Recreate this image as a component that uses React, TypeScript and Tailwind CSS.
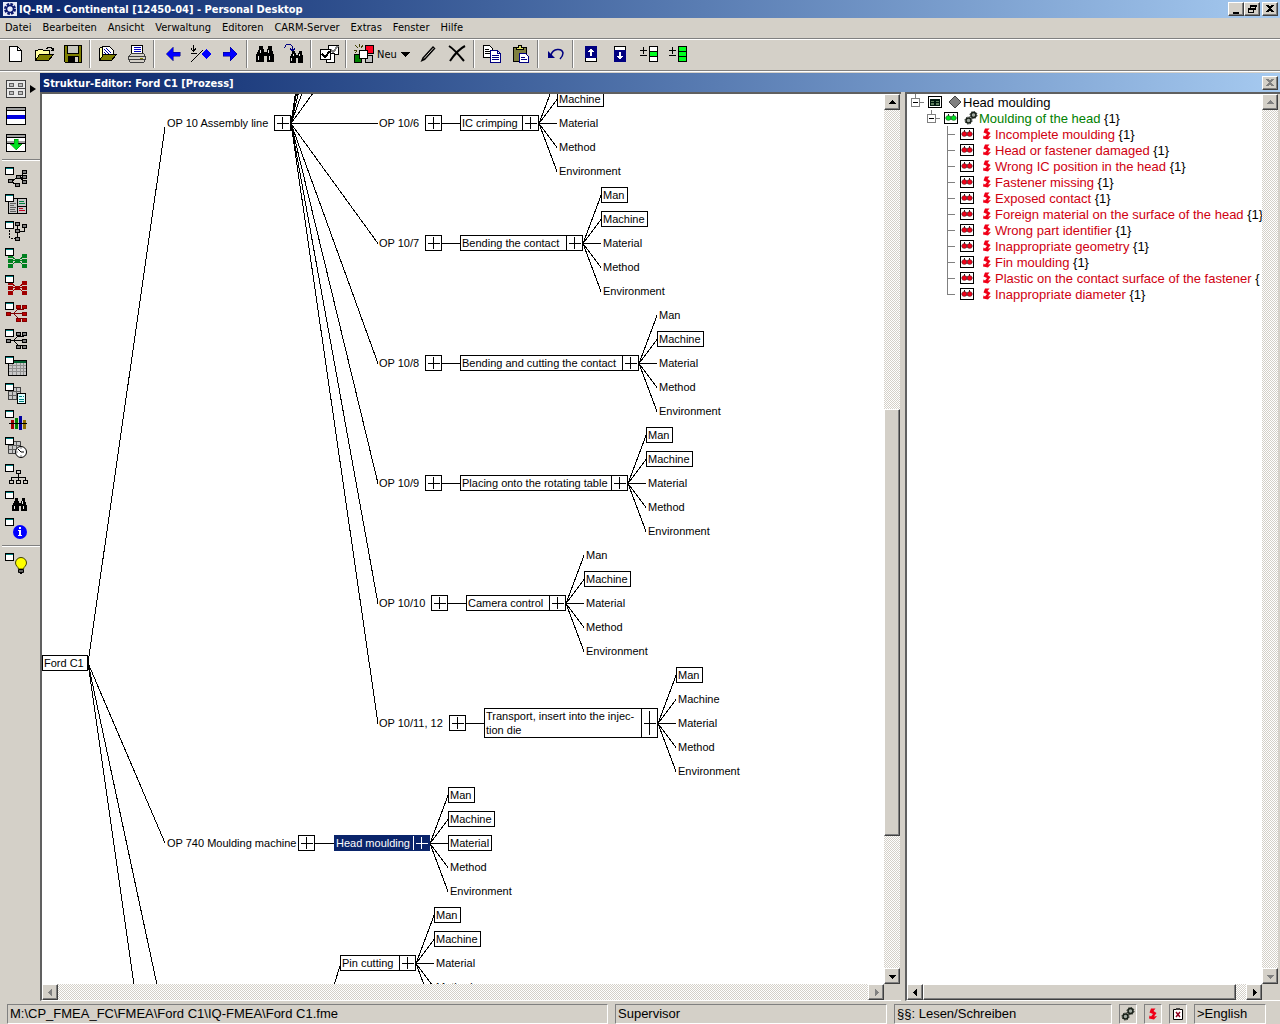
import React from "react";

type Leaf = "Man" | "Machine" | "Material" | "Method" | "Environment";

interface Operation {
  id: string;
  y: number;
  label?: string;
  labelX?: number;
  expandX?: number;
  boxX: number;
  boxWidth: number;
  title: string[];
  boxed: Leaf[];
  selected?: boolean;
}

const LEAVES: Leaf[] = ["Man", "Machine", "Material", "Method", "Environment"];
const LEAF_STEP = 24;

// visible slice of the scrolled diagram
const VIEW_TOP = 0;
const VIEW_BOTTOM = 898;

const LEAF_WIDTH: Record<Leaf, string> = {
  Man: "w-[27px]",
  Machine: "w-[47px]",
  Material: "w-[44px]",
  Method: "w-[44px]",
  Environment: "w-[66px]",
};

const OPERATIONS: Operation[] = [
  { id: "op6", y: 29, label: "OP 10/6", labelX: 337, expandX: 383, boxX: 418, boxWidth: 79, title: ["IC crimping"], boxed: ["Machine"] },
  { id: "op7", y: 149, label: "OP 10/7", labelX: 337, expandX: 383, boxX: 418, boxWidth: 123, title: ["Bending the contact"], boxed: ["Man", "Machine"] },
  { id: "op8", y: 269, label: "OP 10/8", labelX: 337, expandX: 383, boxX: 418, boxWidth: 179, title: ["Bending and cutting the contact"], boxed: ["Machine"] },
  { id: "op9", y: 389, label: "OP 10/9", labelX: 337, expandX: 383, boxX: 418, boxWidth: 168, title: ["Placing onto the rotating table"], boxed: ["Man", "Machine"] },
  { id: "op10", y: 509, label: "OP 10/10", labelX: 337, expandX: 389, boxX: 424, boxWidth: 100, title: ["Camera control"], boxed: ["Machine"] },
  { id: "op11", y: 629, label: "OP 10/11, 12", labelX: 337, expandX: 407, boxX: 442, boxWidth: 174, title: ["Transport, insert into the injec-", "tion die"], boxed: ["Man"] },
  { id: "op740", y: 749, label: "OP 740 Moulding machine", labelX: 125, expandX: 256, boxX: 292, boxWidth: 96, title: ["Head moulding"], boxed: ["Man", "Machine", "Material"], selected: true },
  { id: "pin", y: 869, boxX: 298, boxWidth: 76, title: ["Pin cutting"], boxed: ["Man", "Machine"] },
];

// x1, y1, x2, y2
const TRUNK_LINES = [
  [46, 569, 123, 33],
  [46, 569, 123, 749],
  [46, 569, 92, 891],
  [46, 569, 115, 891],
  [292, 891, 298, 872],
];

// operations hanging off the assembly line, including those scrolled out above
const ASSEMBLY_ROWS = [-571, -451, -331, -211, -91, 29, 149, 269, 389, 509, 629];

const MENU = ["Datei", "Bearbeiten", "Ansicht", "Verwaltung", "Editoren", "CARM-Server", "Extras", "Fenster", "Hilfe"];

const FAILURES = [
  "Incomplete moulding",
  "Head or fastener damaged",
  "Wrong IC position in the head",
  "Fastener missing",
  "Exposed contact",
  "Foreign material on the surface of the head",
  "Wrong part identifier",
  "Inappropriate geometry",
  "Fin moulding",
  "Plastic on the contact surface of the fastener",
  "Inappropriate diameter",
];

const RAISED = "border border-t-white border-l-white border-r-[#404040] border-b-[#404040] bg-[#d4d0c8] shadow-[inset_-1px_-1px_0_#808080]";
const TRACK = "bg-[repeating-conic-gradient(#ffffff_0_25%,#d4d0c8_0_50%)] bg-size-[2px_2px]";

function Icon({ children, smooth = false }: { children: React.ReactNode; smooth?: boolean }) {
  return (
    <svg viewBox="0 0 24 24" className="w-6 h-6 shrink-0" fill="none" shapeRendering={smooth ? "auto" : "crispEdges"} aria-hidden="true">
      {children}
    </svg>
  );
}

/* ---------- toolbar drawings ---------- */

const NewIcon = () => (
  <Icon>
    <path d="M6.500 4.500h8l4 4v11h-12z" fill="#fff" stroke="#000" />
    <path d="M14.500 4.500v4h4" stroke="#000" />
  </Icon>
);

const OpenIcon = () => (
  <Icon>
    <path d="M3.500 18.500v-10h2l1-1h4l1 1h6v4" fill="#ffffa0" stroke="#000" />
    <path d="M3.500 18.500l4-6h14l-5 6z" fill="#808000" stroke="#000" />
    <path d="M14 6.500h1l1-1h3l2 2v1M18.500 8.500h3v-3" stroke="#000" />
  </Icon>
);

const SaveIcon = () => (
  <Icon>
    <path d="M3.500 3.500h17v17h-16l-1-1z" fill="#808000" stroke="#000" />
    <path d="M7 4h10v7H7z" fill="#c8c8c0" />
    <path d="M6.500 4v7.500h11V4" stroke="#000" />
    <path d="M7 14h11v7H7z" fill="#000" />
    <path d="M14 15h3v5h-3z" fill="#d4d0c8" />
  </Icon>
);

const OpenDocIcon = () => (
  <Icon>
    <path d="M3.500 18.500v-12l1-1h3v4h10v3" fill="#ffffa0" stroke="#000" />
    <path d="M6.500 12.500v-8h7l4 4v6h-11z" fill="#fff" stroke="#000" />
    <path d="M8 7l6 6M8 10l3 3M10 6l5 5" stroke="#0000a0" />
    <path d="M3.500 18.500l4-6h13l-5 6z" fill="#808000" stroke="#000" />
  </Icon>
);

const PrintIcon = () => (
  <Icon>
    <path d="M6.500 12V3.500h11V12" fill="#fff" stroke="#000" />
    <path d="M9 5.500h7M9 7.500h7M9 9.500h7" stroke="#0000c0" />
    <path d="M3.500 14.500l3-3h12l2 3v3l-2 3h-13l-2-3z" fill="#d4d0c8" stroke="#404040" />
    <path d="M3 14.500h18M3 17.500h18" stroke="#404040" />
    <path d="M15 16h3v1h-3z" fill="#808000" />
  </Icon>
);

const ArrowIcon = ({ right = false }: { right?: boolean }) => (
  <Icon>
    <path d={right ? "M5 10h7V5l7 7-7 7v-5H5z" : "M20 10h-7V5l-7 7 7 7v-5h7z"} fill="#0000ff" stroke="#000080" strokeWidth={0.5} />
  </Icon>
);

const JumpIcon = () => (
  <Icon>
    <path d="M4.500 3v6M2 6.500l2.500 3L7 6.500M2 11.500h6M2 20L14 8" stroke="#000" />
    <path d="M17 7l5 5-5 5-5-5z" fill="#0000ff" />
  </Icon>
);

const Binoculars = () => (
  <g fill="#000">
    <path d="M6 4h4v3h1v3h3V7h1V4h4v3l2 6v7h-7v-6h-3v6H3v-7l3-6z" />
    <path d="M7 8h1v3H7zM15 8h1v3h-1zM5 14h1v4H5zM16 14h1v4h-1z" fill="#e8e8e8" />
  </g>
);

const FindIcon = () => (
  <Icon>
    <Binoculars />
  </Icon>
);

const FindNextIcon = () => (
  <Icon>
    <path d="M2.500 6l2-3.500h4l2 2v4M8 6.500l2.500 2.500L13 6.500" stroke="#000080" />
    <g transform="translate(5.500 5.500) scale(0.750)">
      <Binoculars />
    </g>
  </Icon>
);

const CheckIcon = () => (
  <Icon>
    <path d="M11.500 3.500h10v9h-10z" fill="#fff" stroke="#000" />
    <path d="M14 8l2 2 5-6" stroke="#808080" strokeWidth={2} />
    <path d="M9.500 11.500h8v9h-8z" fill="#fff" stroke="#000" />
    <path d="M3.500 7.500h10v10h-10z" fill="#fff" stroke="#000" />
    <path d="M5 12l3 3 5-6" stroke="#000" strokeWidth={2} />
  </Icon>
);

const NewObjectIcon = () => (
  <Icon>
    <path d="M12.500 3.500h8v8h-8z" fill="#ff0020" stroke="#000" />
    <path d="M1.500 12.500h7v8h-7z" fill="#008000" stroke="#000" />
    <path d="M12.500 13.500h7v7h-7z" fill="#c0c0c0" stroke="#000" />
    <path d="M6.500 8.500h8v8h-8z" fill="#fff" stroke="#000" />
    <path d="M2 3l3 3M6.500 2v3M10 3L8 6M1 8h3M2 11l2-2" stroke="#404000" />
  </Icon>
);

const PencilIcon = () => (
  <Icon smooth>
    <path d="M4.500 20l2-4.500L17 4l2.500 2.500L9 18z" fill="#000" />
    <path d="M8 16.500L17.500 6" stroke="#d4d0c8" />
  </Icon>
);

const DeleteIcon = () => (
  <Icon smooth>
    <path d="M4 4c5 3 10 9 15 15" stroke="#000" strokeWidth={2} />
    <path d="M20 4C14 7 9 13 5 19" stroke="#000" strokeWidth={2} />
  </Icon>
);

const CopyIcon = () => (
  <Icon>
    <path d="M3.500 3.500h6l3 3v9h-9z" fill="#fff" stroke="#000" />
    <path d="M5 7.500h4M5 9.500h5M5 11.500h5" stroke="#000" />
    <path d="M10.500 8.500h7l3 3v9h-10z" fill="#fff" stroke="#000080" />
    <path d="M17.500 8.500v3h3M12 13.500h7M12 15.500h7M12 17.500h7" stroke="#000080" />
  </Icon>
);

const PasteIcon = () => (
  <Icon>
    <path d="M4.500 5.500h13v14h-13z" fill="#808040" stroke="#000" />
    <path d="M7.500 7.500v-2h2v-2h3v2h2v2z" fill="#e0e060" stroke="#000" />
    <path d="M10.500 11.500h6l3 3v6h-9z" fill="#fff" stroke="#000080" />
    <path d="M12 15.500h4M12 17.500h6" stroke="#000080" />
  </Icon>
);

const UndoIcon = () => (
  <Icon smooth>
    <path d="M7 13C9 6 18 6 19 11c0 3-1 4-3 6" stroke="#000080" strokeWidth={1.5} />
    <path d="M4 9v7h7z" fill="#000080" />
  </Icon>
);

const UpIcon = () => (
  <Icon>
    <path d="M6.500 4.500h11v15h-11z" fill="#fff" stroke="#000" />
    <path d="M6 4h12v12H6z" fill="#000080" />
    <path d="M11 14v-4H9l3-4 3 4h-2v4z" fill="#fff" />
  </Icon>
);

const DownIcon = () => (
  <Icon>
    <path d="M6.500 4.500h11v15h-11z" fill="#fff" stroke="#000" />
    <path d="M6 8h12v12H6z" fill="#000080" />
    <path d="M11 10v4H9l3 4 3-4h-2v-4z" fill="#fff" />
  </Icon>
);

const LevelIcon = ({ full = false }: { full?: boolean }) => (
  <Icon>
    <path d="M3 8.500h7M6.500 5v7M3 13.500h7" stroke="#000" />
    <path d="M12.500 4.500h8v15h-8z" fill={full ? "#00ff20" : "#fff"} stroke="#000" />
    <path d="M13 10h7v5h-7z" fill="#00ff20" />
    <path d="M12 9.500h8M12 14.500h8" stroke="#000" />
  </Icon>
);

/* ---------- sidebar drawings ---------- */

const MiniWindow = () => (
  <g shapeRendering="crispEdges">
    <path d="M0.500 1.500h8v7h-8z" fill="#fff" stroke="#000" />
    <path d="M1 2h7v1H1z" fill="#008080" />
  </g>
);

function Boxes({ points, fill, stroke = "#000" }: { points: number[][]; fill: string; stroke?: string }) {
  return (
    <>
      {points.map(([x, y]) => (
        <rect key={`${x}-${y}`} x={x + 0.5} y={y + 0.5} width={4} height={3} fill={fill} stroke={stroke} />
      ))}
    </>
  );
}

const OverviewIcon = () => (
  <Icon>
    <path d="M1.500 3.500h19v17h-19z" fill="#e8e8e8" stroke="#404040" />
    <path d="M2 11.500h18" stroke="#404040" />
    <Boxes points={[[4, 6], [13, 6], [4, 14], [13, 14]]} fill="#c0c0c0" stroke="#606060" />
  </Icon>
);

const SplitIcon = () => (
  <Icon>
    <path d="M1.500 3.500h19v17h-19z" fill="#fff" stroke="#000" />
    <path d="M2 4h18v2H2z" fill="#a0a0a0" />
    <path d="M2 11h18v4H2z" fill="#0000e0" />
    <path d="M2 6.500h18" stroke="#000" />
  </Icon>
);

const InsertIcon = () => (
  <Icon>
    <path d="M1.500 3.500h19v17h-19z" fill="#fff" stroke="#000" />
    <path d="M2 4h18v2H2zM2 10h18v2H2z" fill="#a0a0a0" />
    <path d="M2 6.500h18M2 12.500h18" stroke="#000" />
    <path d="M9 8h4v5h4l-6 6-6-6h4z" fill="#00e020" stroke="#008000" strokeWidth={0.5} />
  </Icon>
);

const StructureIcon = () => (
  <Icon>
    <path d="M7 15l6-4h8M14 11l7-5M14 11l7 6M7 16l6 4" stroke="#000" />
    <Boxes points={[[17, 4], [11, 9], [17, 9], [17, 14], [3, 13], [10, 17]]} fill="#808080" />
    <MiniWindow />
  </Icon>
);

const FormIcon = () => (
  <Icon>
    <path d="M3.500 5.500h18v15h-18z" fill="#c8c8c8" stroke="#000" />
    <path d="M12.500 5v15M12 13.500h9" stroke="#000" />
    <path d="M14 8.500h5M14 10.500h6" stroke="#008040" />
    <path d="M14 15.500h4M14 17.500h6" stroke="#c00020" />
    <path d="M5 10.500h6M5 12.500h4M5 14.500h6M5 16.500h5M5 18.500h6" stroke="#606060" />
    <MiniWindow />
  </Icon>
);

const FlowIcon = () => (
  <Icon>
    <path d="M12.500 4v14M14 11.500h5V6" stroke="#000" />
    <path d="M4.500 10v8h6" stroke="#000" strokeDasharray="2 1" />
    <Boxes points={[[10, 2], [17, 4], [10, 9], [10, 17]]} fill="#808080" />
    <MiniWindow />
  </Icon>
);

const NetIcon = ({ fill }: { fill: string }) => (
  <Icon>
    <path d="M5 9l7 4-7 7M5 13.500h14M20 9l-7 4 7 7" stroke={fill} />
    <Boxes points={[[3, 7], [3, 12], [3, 17], [10, 12], [17, 7], [17, 12], [17, 17]]} fill={fill} stroke={fill} />
    <MiniWindow />
  </Icon>
);

const TreeNetIcon = ({ fill, stroke }: { fill: string; stroke: string }) => (
  <Icon>
    <path d="M4 12.500h16M9 12l4-4h6M9 13l4 4h6" stroke={stroke} />
    <Boxes points={[[1, 11], [11, 4], [17, 4], [17, 11], [11, 17], [17, 17]]} fill={fill} stroke={stroke} />
    <MiniWindow />
  </Icon>
);

const TableIcon = () => (
  <Icon>
    <path d="M3.500 5.500h18v15h-18z" fill="#c8c8c8" stroke="#000" />
    <path d="M4 6h17v2H4z" fill="#006030" />
    <path d="M4 10.500h17M4 13.500h17M4 16.500h17M7.500 8v12M11.500 8v12M15.500 8v12M18.500 8v12" stroke="#909090" />
    <MiniWindow />
  </Icon>
);

const TableSheet = () => (
  <g>
    <path d="M3.500 5.500h12v12h-12z" fill="#c8c8c8" stroke="#404040" />
    <path d="M4 9.500h11M4 13.500h11M7.500 6v11M11.500 6v11" stroke="#606060" />
  </g>
);

const TableDocIcon = () => (
  <Icon>
    <TableSheet />
    <path d="M12.500 11.500h8v10h-8z" fill="#e0ffff" stroke="#000" />
    <path d="M14 14.500h3M14 17.500h5M14 19.500h5M18 14.500h1" stroke="#008080" />
    <MiniWindow />
  </Icon>
);

const ChartIcon = () => (
  <Icon>
    <path d="M6 11h3v9H6z" fill="#a00000" />
    <path d="M10 9h3v11h-3z" fill="#008000" />
    <path d="M14 7h3v14h-3z" fill="#0000a0" />
    <path d="M18 11h3v9h-3z" fill="#907000" />
    <path d="M4 14.500h18" stroke="#000" />
    <MiniWindow />
  </Icon>
);

const ClockIcon = () => (
  <Icon smooth>
    <TableSheet />
    <circle cx={16} cy={16} r={5.5} fill="#fff" stroke="#000" />
    <path d="M13 13l3 3h3" stroke="#000" />
    <path d="M16 11.500v1M16 19.500v1M11.500 16h1" stroke="#000" />
    <MiniWindow />
  </Icon>
);

const OrgIcon = () => (
  <Icon>
    <path d="M13.500 11v4M6.500 17v-2.500h14V17M13.500 14v4" stroke="#000" />
    <Boxes points={[[11, 7], [4, 17], [11, 17], [18, 17]]} fill="#d4d0c8" />
    <MiniWindow />
  </Icon>
);

const SearchWindowIcon = () => (
  <Icon>
    <g transform="translate(5 5) scale(0.800)">
      <Binoculars />
    </g>
    <MiniWindow />
  </Icon>
);

const InfoIcon = () => (
  <Icon smooth>
    <circle cx={15} cy={15} r={7} fill="#0000ff" />
    <path d="M14 10h2v2h-2zM13 13h3v5h1v1h-4v-1h1v-4h-1z" fill="#fff" />
    <MiniWindow />
  </Icon>
);

const BulbIcon = () => (
  <Icon smooth>
    <path d="M13.500 17c0-2-3-3-3-6a5.500 5.500 0 0 1 11 0c0 3-3 4-3 6z" fill="#ffff00" stroke="#404000" />
    <path d="M13.500 17.500h5v3h-5z" fill="#c0c0c0" stroke="#000" />
    <path d="M14 19h4M15 21.500h2" stroke="#000" />
    <MiniWindow />
  </Icon>
);

/* ---------- small status / tree glyphs ---------- */

const BoltGlyph = () => (
  <svg viewBox="0 0 10 12" className="w-[10px] h-3" aria-hidden="true">
    <path d="M3 0.500h4.500L5.500 3 8.500 5 6 8.500 9 8 6 11.500 1 10.500 1.500 7.500 3 8.500 5 6 1.500 4.500z" fill="#f00018" />
  </svg>
);

const GearGlyph = () => (
  <svg viewBox="0 0 14 14" className="w-[14px] h-[14px]" aria-hidden="true">
    <circle cx={9.5} cy={4} r={2.5} fill="#a0a8a0" stroke="#182018" strokeWidth={1.5} />
    <circle cx={4.5} cy={9.5} r={2.5} fill="#a0a8a0" stroke="#182018" strokeWidth={1.5} />
    <circle cx={9.5} cy={4} r={3.5} fill="none" stroke="#182018" strokeDasharray="1.500 1.200" />
    <circle cx={4.5} cy={9.5} r={3.5} fill="none" stroke="#182018" strokeDasharray="1.500 1.200" />
  </svg>
);

const DiamondGlyph = () => (
  <svg viewBox="0 0 14 14" className="w-[14px] h-[14px]" aria-hidden="true">
    <path d="M7 1l6 6-6 6-6-6z" fill="#808080" stroke="#404040" />
  </svg>
);

const RootBoxGlyph = () => (
  <svg viewBox="0 0 16 14" className="w-4 h-[14px]" shapeRendering="crispEdges" aria-hidden="true">
    <path d="M1.500 1.500h13v11h-13z" fill="#fff" stroke="#000" />
    <path d="M3 4h10v7H3z" fill="#001810" />
    <path d="M4 6h3v1H4zM9 6h3v1H9zM4 8h3v2H4zM9 8h3v2H9z" fill="#608060" />
  </svg>
);

const NetBoxGlyph = ({ fill }: { fill: string }) => (
  <svg viewBox="0 0 16 14" className="w-4 h-[14px]" aria-hidden="true">
    <path d="M1.500 1.500h13v11h-13z" fill="#fff" stroke="#000" shapeRendering="crispEdges" />
    <path d="M5.500 3v2M10.500 3v2M8 5v4M2.500 7H5M11 7h2.500" stroke="#202020" />
    <circle cx={5.3} cy={7} r={2.5} fill={fill} stroke="#202020" strokeWidth={0.4} />
    <circle cx={10.7} cy={7} r={2.5} fill={fill} stroke="#202020" strokeWidth={0.4} />
  </svg>
);

/* ---------- window chrome ---------- */

function ToolButton({ label, children }: { label: string; children: React.ReactNode }) {
  return (
    <button type="button" aria-label={label} className="w-[29px] h-[29px] flex items-center justify-center">
      {children}
    </button>
  );
}

const ToolSeparator = () => <span className="w-[2px] h-7 mx-[2px] border-l border-l-[#808080] border-r border-r-white" />;

function SideButton({ label, children }: { label: string; children: React.ReactNode }) {
  return (
    <button type="button" aria-label={label} className="h-[27px] pl-[5px] flex items-center gap-[1px]">
      {children}
    </button>
  );
}

const SideSeparator = () => <span className="h-[2px] my-[3px] ml-[2px] border-t border-t-[#808080] border-b border-b-white" />;

function WindowButton({ label, children }: { label: string; children: React.ReactNode }) {
  return (
    <button type="button" aria-label={label} className={`w-4 h-[14px] flex items-center justify-center ${RAISED}`}>
      <svg viewBox="0 0 12 10" className="w-3 h-[10px]" fill="none" shapeRendering="crispEdges" aria-hidden="true">
        {children}
      </svg>
    </button>
  );
}

const ARROW_PATHS = {
  up: "M4 9h7L7.500 5z",
  down: "M4 6h7L7.500 10z",
  left: "M9 4v7L5 7.500z",
  right: "M6 4v7l4-3.500z",
};

function ScrollButton({ dir, disabled = false }: { dir: keyof typeof ARROW_PATHS; disabled?: boolean }) {
  return (
    <button type="button" aria-label={`Scroll ${dir}`} disabled={disabled} className={`w-4 h-4 shrink-0 ${RAISED}`}>
      <svg viewBox="0 0 14 14" className="w-[14px] h-[14px]" shapeRendering="crispEdges" aria-hidden="true">
        <path d={ARROW_PATHS[dir]} fill={disabled ? "#808080" : "#000"} />
      </svg>
    </button>
  );
}

function TitleBar() {
  return (
    <header className="h-[18px] shrink-0 flex items-center pl-[3px] pr-[2px] bg-linear-to-r from-[#0a246a] to-[#a6caf0]">
      <svg viewBox="0 0 14 14" className="w-[14px] h-[14px]" aria-hidden="true">
        <path d="M0 0h14v14H0z" fill="#e8ecf8" />
        <circle cx={7} cy={7} r={4.5} fill="none" stroke="#0a1870" strokeWidth={3} strokeDasharray="2.400 1.100" />
        <circle cx={7} cy={7} r={3.5} fill="none" stroke="#0a1870" strokeWidth={1.5} />
      </svg>
      <h1 className="flex-1 pl-[2px] pt-[2px] text-[11px] leading-4 font-bold text-white whitespace-nowrap">
        IQ-RM - Continental [12450-04] - Personal Desktop
      </h1>
      <WindowButton label="Minimize">
        <path d="M3 8h6v2H3z" fill="#000" />
      </WindowButton>
      <WindowButton label="Restore">
        <path d="M4 1h6v1H4zM4.500 1v3M9.500 1v5M8 5.500h2M2 4h6v1H2zM2.500 4v5M7.500 4v5M2 8.500h6" stroke="#000" />
      </WindowButton>
      <span className="w-[2px]" />
      <WindowButton label="Close">
        <path d="M3 1l6 7M9 1L3 8" stroke="#000" strokeWidth={2} />
      </WindowButton>
    </header>
  );
}

function MenuBar() {
  return (
    <nav className="h-5 shrink-0 flex items-center gap-[11px] pl-[5px] text-[11px]">
      {MENU.map((item) => (
        <button key={item} type="button" className="whitespace-nowrap">
          {item}
        </button>
      ))}
    </nav>
  );
}

function Toolbar() {
  return (
    <div className="h-[33px] shrink-0 flex items-center pb-[1px] border-t border-t-[#808080] border-b border-b-[#808080] shadow-[inset_0_1px_0_#ffffff,0_1px_0_#ffffff]">
      <ToolButton label="Neu"><NewIcon /></ToolButton>
      <ToolButton label="Öffnen"><OpenIcon /></ToolButton>
      <ToolButton label="Speichern"><SaveIcon /></ToolButton>
      <ToolSeparator />
      <ToolButton label="Dokument öffnen"><OpenDocIcon /></ToolButton>
      <ToolButton label="Drucken"><PrintIcon /></ToolButton>
      <ToolSeparator />
      <ToolButton label="Zurück"><ArrowIcon /></ToolButton>
      <ToolButton label="Springen"><JumpIcon /></ToolButton>
      <ToolButton label="Vor"><ArrowIcon right /></ToolButton>
      <ToolSeparator />
      <ToolButton label="Suchen"><FindIcon /></ToolButton>
      <ToolButton label="Weitersuchen"><FindNextIcon /></ToolButton>
      <ToolSeparator />
      <ToolButton label="Auswahl"><CheckIcon /></ToolButton>
      <ToolSeparator />
      <button type="button" className="w-16 h-[29px] pl-1 flex items-center text-[11px]">
        <NewObjectIcon />
        <span className="pt-[2px]">Neu</span>
        <svg viewBox="0 0 9 5" className="w-[9px] h-[5px] ml-1" shapeRendering="crispEdges" aria-hidden="true">
          <path d="M0 0h9L4.500 5z" fill="#000" />
        </svg>
      </button>
      <ToolButton label="Bearbeiten"><PencilIcon /></ToolButton>
      <ToolButton label="Löschen"><DeleteIcon /></ToolButton>
      <ToolSeparator />
      <ToolButton label="Kopieren"><CopyIcon /></ToolButton>
      <ToolButton label="Einfügen"><PasteIcon /></ToolButton>
      <ToolSeparator />
      <ToolButton label="Rückgängig"><UndoIcon /></ToolButton>
      <ToolSeparator />
      <ToolButton label="Nach oben"><UpIcon /></ToolButton>
      <ToolButton label="Nach unten"><DownIcon /></ToolButton>
      <ToolButton label="Ebene"><LevelIcon /></ToolButton>
      <ToolButton label="Alle Ebenen"><LevelIcon full /></ToolButton>
    </div>
  );
}

function Sidebar() {
  return (
    <aside className="w-10 shrink-0 flex flex-col pt-[2px]">
      <SideButton label="Übersicht">
        <OverviewIcon />
        <svg viewBox="0 0 6 8" className="w-[6px] h-2" aria-hidden="true">
          <path d="M0 0v8l6-4z" fill="#000" />
        </svg>
      </SideButton>
      <SideButton label="Teilen"><SplitIcon /></SideButton>
      <SideButton label="Einfügen"><InsertIcon /></SideButton>
      <SideSeparator />
      <SideButton label="Struktur"><StructureIcon /></SideButton>
      <SideButton label="Formblatt"><FormIcon /></SideButton>
      <SideButton label="Ablauf"><FlowIcon /></SideButton>
      <SideButton label="Funktionsnetz"><NetIcon fill="#008020" /></SideButton>
      <SideButton label="Fehlernetz"><NetIcon fill="#a00000" /></SideButton>
      <SideButton label="Fehlerbaum"><TreeNetIcon fill="#c00000" stroke="#800000" /></SideButton>
      <SideButton label="Baum"><TreeNetIcon fill="#808080" stroke="#000" /></SideButton>
      <SideButton label="Tabelle"><TableIcon /></SideButton>
      <SideButton label="Bericht"><TableDocIcon /></SideButton>
      <SideButton label="Statistik"><ChartIcon /></SideButton>
      <SideButton label="Termine"><ClockIcon /></SideButton>
      <SideButton label="Organisation"><OrgIcon /></SideButton>
      <SideButton label="Suche"><SearchWindowIcon /></SideButton>
      <SideButton label="Info"><InfoIcon /></SideButton>
      <SideSeparator />
      <SideButton label="Tipp"><BulbIcon /></SideButton>
    </aside>
  );
}

/* ---------- structure diagram ---------- */

const PlusMark = () => (
  <svg className="w-[15px] h-full" shapeRendering="crispEdges" aria-hidden="true">
    <rect x={2} y="50%" width={12} height={1} fill="currentColor" />
    <rect x={7} y="8%" width={1} height="86%" fill="currentColor" />
  </svg>
);

function Expander({ x, y }: { x: number; y: number }) {
  return (
    <button
      type="button"
      aria-label="Expand"
      className="absolute w-[17px] h-4 border border-black bg-white"
      style={{ left: x, top: y - 8 }}
    >
      <PlusMark />
    </button>
  );
}

function NodeLabel({ x, y, children }: { x: number; y: number; children: React.ReactNode }) {
  return (
    <span className="absolute leading-4 whitespace-nowrap" style={{ left: x, top: y - 8 }}>
      {children}
    </span>
  );
}

function OperationNode({ op }: { op: Operation }) {
  const tall = op.title.length > 1;
  const leafX = op.boxX + op.boxWidth + 18;
  return (
    <>
      {op.label && <NodeLabel x={op.labelX ?? 0} y={op.y}>{op.label}</NodeLabel>}
      {op.expandX && <Expander x={op.expandX} y={op.y} />}
      <div
        className={`absolute flex border ${tall ? "h-[30px]" : "h-4"} ${
          op.selected ? "bg-[#0a246a] border-[#0a246a] text-white" : "bg-white border-black"
        }`}
        style={{ left: op.boxX, top: op.y - (tall ? 15 : 8), width: op.boxWidth }}
      >
        <div className="flex-1 pl-[1px] leading-[14px] whitespace-nowrap">
          {op.title.map((line) => (
            <div key={line}>{line}</div>
          ))}
        </div>
        <button type="button" aria-label={`Expand ${op.title[0]}`} className="w-4 shrink-0 border-l border-current">
          <PlusMark />
        </button>
      </div>
      {LEAVES.map((leaf, i) => {
        const y = op.y + (i - 2) * LEAF_STEP;
        if (y < VIEW_TOP || y > VIEW_BOTTOM) return null;
        const boxed = op.boxed.includes(leaf);
        return (
          <div
            key={leaf}
            className={`absolute h-4 pl-[1px] leading-[14px] border whitespace-nowrap ${LEAF_WIDTH[leaf]} ${
              boxed ? "border-black" : "border-transparent"
            }`}
            style={{ left: leafX, top: y - 8 }}
          >
            {leaf}
          </div>
        );
      })}
    </>
  );
}

function StructureCanvas() {
  return (
    <div className="relative flex-1 min-w-0 overflow-hidden bg-white font-['Liberation_Sans',Arial,sans-serif] text-[11px]">
      <svg className="absolute inset-0 w-full h-full" stroke="#000" shapeRendering="crispEdges" aria-hidden="true">
        {TRUNK_LINES.map(([x1, y1, x2, y2]) => (
          <line key={`${x2}-${y2}`} x1={x1} y1={y1} x2={x2} y2={y2} />
        ))}
        {ASSEMBLY_ROWS.map((y) => (
          <line key={y} x1={249} y1={29.5} x2={336} y2={y + 0.5} />
        ))}
        {OPERATIONS.map((op) => {
          const right = op.boxX + op.boxWidth;
          return (
            <g key={op.id}>
              {op.expandX && <line x1={op.expandX + 17} y1={op.y + 0.5} x2={op.boxX} y2={op.y + 0.5} />}
              {LEAVES.map((leaf, i) => (
                <line key={leaf} x1={right} y1={op.y + 0.5} x2={right + 18} y2={op.y + (i - 2) * LEAF_STEP + 0.5} />
              ))}
            </g>
          );
        })}
      </svg>
      <div className="absolute h-4 w-[46px] pl-[1px] leading-[14px] border border-black bg-white whitespace-nowrap" style={{ left: 0, top: 561 }}>
        Ford C1
      </div>
      <NodeLabel x={125} y={29}>OP 10 Assembly line</NodeLabel>
      <Expander x={232} y={29} />
      {OPERATIONS.map((op) => (
        <OperationNode key={op.id} op={op} />
      ))}
    </div>
  );
}

function StructurePane() {
  return (
    <main className="flex-1 min-w-0 flex flex-col border-t-2 border-l-2 border-[#606060] border-b border-b-white">
      <div className="flex-1 min-h-0 flex pr-[1px]">
        <StructureCanvas />
        <div className={`w-4 shrink-0 flex flex-col ${TRACK}`}>
          <ScrollButton dir="up" />
          <span className="flex-[300]" />
          <span className={`flex-[426] ${RAISED}`} />
          <span className="flex-[132]" />
          <ScrollButton dir="down" />
        </div>
      </div>
      <div className="h-4 shrink-0 flex">
        <div className={`flex-1 flex justify-between ${TRACK}`}>
          <ScrollButton dir="left" disabled />
          <ScrollButton dir="right" disabled />
        </div>
        <span className="w-[17px]" />
      </div>
    </main>
  );
}

/* ---------- function / failure tree ---------- */

function TreeConnector({ kind }: { kind: "open" | "branch" | "last" }) {
  return (
    <svg viewBox="0 0 20 16" className="w-5 h-4 shrink-0" fill="none" stroke="#808080" shapeRendering="crispEdges" aria-hidden="true">
      {kind === "open" && (
        <>
          <path d="M8.500 0v4M13 8.500h4" />
          <path d="M4.500 4.500h8v8h-8z" fill="#fff" />
          <path d="M6 8.500h5" stroke="#000" />
        </>
      )}
      {kind === "branch" && <path d="M8.500 0v16M8 8.500h8" />}
      {kind === "last" && <path d="M8.500 0v8.500h7.500" />}
    </svg>
  );
}

function TreeRow({ connector, box, glyph, children }: {
  connector: "open" | "branch" | "last";
  box: React.ReactNode;
  glyph: React.ReactNode;
  children: React.ReactNode;
}) {
  return (
    <div className="h-4 flex items-center leading-4 whitespace-nowrap">
      <TreeConnector kind={connector} />
      <span className="w-4 shrink-0">{box}</span>
      <span className="w-5 shrink-0 flex justify-end pr-[1px]">{glyph}</span>
      <span className="pt-[1px]">{children}</span>
    </div>
  );
}

function TreePane() {
  return (
    <section className="w-[375px] shrink-0 flex flex-col border-t-2 border-l-2 border-[#606060] border-b border-b-white font-['Liberation_Sans',Arial,sans-serif] text-[13px]">
      <div className="flex-1 min-h-0 flex">
        <ul className="flex-1 min-w-0 overflow-hidden bg-white">
          <li>
            <TreeRow connector="open" box={<RootBoxGlyph />} glyph={<DiamondGlyph />}>
              Head moulding
            </TreeRow>
            <ul className="pl-4">
              <li>
                <TreeRow connector="open" box={<NetBoxGlyph fill="#00e020" />} glyph={<GearGlyph />}>
                  <span className="text-[#008000]">Moulding of the head</span>
                  {" {1}"}
                </TreeRow>
                <ul className="pl-4">
                  {FAILURES.map((failure, i) => (
                    <li key={failure}>
                      <TreeRow
                        connector={i === FAILURES.length - 1 ? "last" : "branch"}
                        box={<NetBoxGlyph fill="#f00018" />}
                        glyph={<span className="pr-[2px]"><BoltGlyph /></span>}
                      >
                        <span className="text-[#d00010]">{failure}</span>
                        {failure.startsWith("Plastic") ? " {" : " {1}"}
                      </TreeRow>
                    </li>
                  ))}
                </ul>
              </li>
            </ul>
          </li>
        </ul>
        <div className={`w-4 mr-[2px] shrink-0 flex flex-col justify-between ${TRACK}`}>
          <ScrollButton dir="up" disabled />
          <ScrollButton dir="down" disabled />
        </div>
      </div>
      <div className="h-4 shrink-0 flex">
        <div className={`flex-1 flex ${TRACK}`}>
          <ScrollButton dir="left" />
          <span className={`flex-[313] ${RAISED}`} />
          <span className="flex-[10]" />
          <ScrollButton dir="right" />
        </div>
        <span className="w-[18px]" />
      </div>
    </section>
  );
}

const SUNKEN = "h-5 flex items-center border border-t-[#808080] border-l-[#808080] border-r-white border-b-white whitespace-nowrap overflow-hidden";

function StatusBar() {
  return (
    <footer className="h-[23px] shrink-0 flex items-center gap-[7px] pl-[7px] pr-[14px] pt-[2px] font-['Liberation_Sans',Arial,sans-serif] text-[13px]">
      <span className={`flex-1 min-w-0 pl-[2px] ${SUNKEN}`}>M:\CP_FMEA_FC\FMEA\Ford C1\IQ-FMEA\Ford C1.fme</span>
      <span className={`w-[272px] pl-[2px] ${SUNKEN}`}>Supervisor</span>
      <span className={`w-[218px] pl-[2px] ${SUNKEN}`}>§§: Lesen/Schreiben</span>
      <span className={`w-[18px] justify-center ${SUNKEN}`}>
        <GearGlyph />
      </span>
      <span className={`w-[18px] justify-center ${SUNKEN}`}>
        <BoltGlyph />
      </span>
      <span className={`w-[18px] justify-center ${SUNKEN}`}>
        <svg viewBox="0 0 12 14" className="w-3 h-[14px]" fill="none" aria-hidden="true">
          <path d="M1.500 2.500h9v10h-9z" fill="#fff" stroke="#000" />
          <path d="M4 1h4v2H4z" fill="#404040" />
          <path d="M4 5l4 5M8 5l-4 5" stroke="#900020" strokeWidth={1.5} />
        </svg>
      </span>
      <span className={`w-[72px] pl-[2px] ${SUNKEN}`}>&gt;English</span>
    </footer>
  );
}

export default function App() {
  return (
    <div className="h-screen flex flex-col overflow-hidden bg-[#d4d0c8] text-black font-['DejaVu_Sans_Condensed','DejaVu_Sans',sans-serif]">
      <TitleBar />
      <MenuBar />
      <Toolbar />
      <div className="flex-1 min-h-0 flex pt-[2px]">
        <Sidebar />
        <div className="flex-1 min-w-0 flex flex-col">
          <div className="h-[19px] shrink-0 flex items-center pl-[3px] pr-[2px] bg-linear-to-r from-[#0a246a] to-[#a6caf0]">
            <h2 className="flex-1 pt-[2px] text-[11px] leading-4 font-bold text-white whitespace-nowrap">Struktur-Editor: Ford C1 [Prozess]</h2>
            <WindowButton label="Close editor">
              <path d="M3 1l6 7M9 1L3 8" stroke="#808080" strokeWidth={2} />
            </WindowButton>
          </div>
          <div className="flex-1 min-h-0 flex">
            <StructurePane />
            <span className="w-1 shrink-0" />
            <TreePane />
          </div>
        </div>
      </div>
      <StatusBar />
    </div>
  );
}
